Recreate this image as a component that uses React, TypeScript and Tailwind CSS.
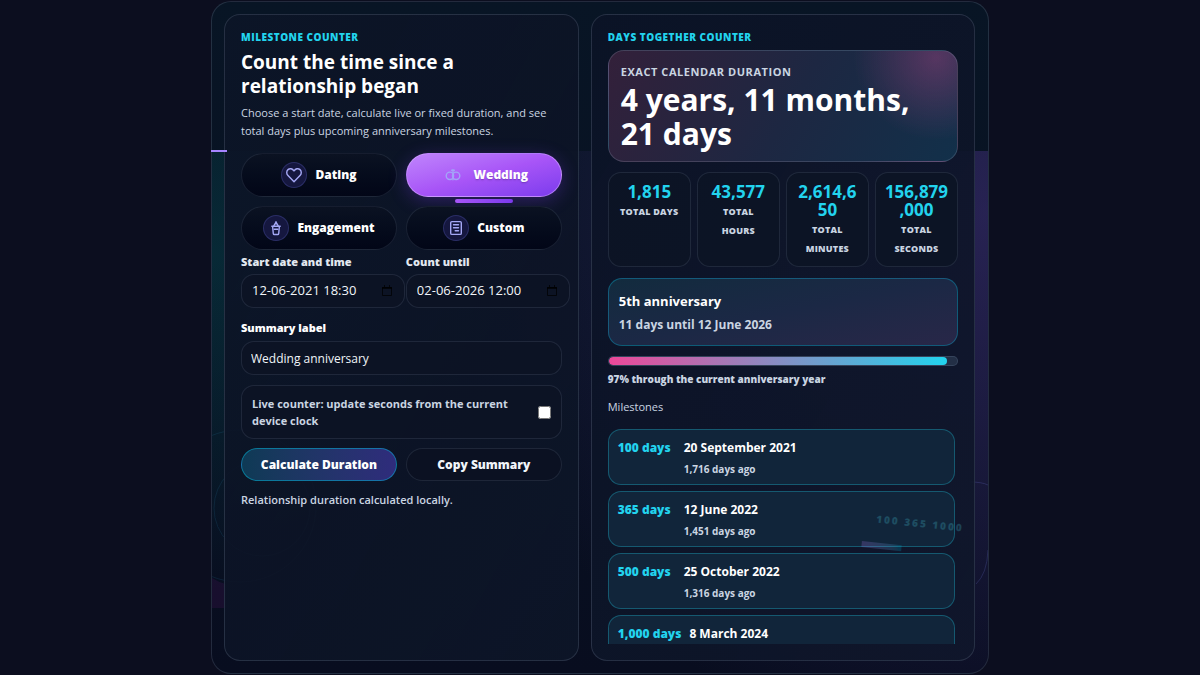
import React, { useState } from 'react';

type Kind = 'Dating' | 'Wedding' | 'Engagement' | 'Custom';

const kinds: Kind[] = ['Dating', 'Wedding', 'Engagement', 'Custom'];

const stats = [
  { value: '1,815', label: 'Total days' },
  { value: '43,577', label: 'Total hours' },
  { value: '2,614,650', label: 'Total minutes' },
  { value: '156,879,000', label: 'Total seconds' },
];

const milestones = [
  { tag: '100 days', date: '20 September 2021', note: '1,716 days ago' },
  { tag: '365 days', date: '12 June 2022', note: '1,451 days ago' },
  { tag: '500 days', date: '25 October 2022', note: '1,316 days ago' },
  { tag: '1,000 days', date: '8 March 2024', note: '816 days ago' },
];

const KindIcon: React.FC<{ kind: Kind }> = ({ kind }) => (
  <svg
    viewBox="0 0 18 18"
    className="size-[18px]"
    fill="none"
    stroke="currentColor"
    strokeWidth="1.400"
    strokeLinecap="round"
    strokeLinejoin="round"
    aria-hidden="true"
  >
    {kind === 'Dating' && (
      <path d="M9 15.800 3 9.600C1.200 7.700 1.400 5 3 3.600c1.900-1.600 4.500-1 6 1.400 1.500-2.400 4.100-3 6-1.400 1.600 1.400 1.800 4.100 0 6z" />
    )}
    {kind === 'Wedding' && (
      <>
        <circle cx="5.900" cy="9.800" r="3.700" />
        <circle cx="12.100" cy="9.800" r="3.700" />
        <path d="M9 3.600v10.200M7.600 4.200h2.800" />
      </>
    )}
    {kind === 'Engagement' && (
      <>
        <path d="M4.800 7.200h8.400M5.600 7.200l.7 7.400q.1.900 1 .9h3.400q.9 0 1-.9l.7-7.400" />
        <path d="M6.800 6.800 9 3l2.200 3.800M9 2.600v2.200M7.200 10.200h3.600" />
      </>
    )}
    {kind === 'Custom' && (
      <>
        <rect x="3.700" y="2.600" width="10.600" height="12.800" rx="1.200" />
        <path d="M6.500 5.800h5M6.500 8.800h5M8.200 11.800h3.300" />
      </>
    )}
  </svg>
);

const Eyebrow: React.FC<{ children: React.ReactNode }> = ({ children }) => (
  <p className="text-[10px] leading-3 font-extrabold uppercase tracking-wider text-[#22d3ee]">{children}</p>
);

type DateFieldProps = {
  id: string;
  label: string;
  defaultValue: string;
};

const DateField: React.FC<DateFieldProps> = ({ id, label, defaultValue }) => (
  <div className="min-w-0">
    <label htmlFor={id} className="block text-[11px] leading-[14px] font-extrabold text-slate-200">
      {label}
    </label>
    <div className="mt-[5px] flex h-[34px] w-[calc(100%+8px)] items-center rounded-[13px] border border-slate-400/15 bg-[#0c1324]/80 px-[10px]">
      <input
        id={id}
        type="text"
        defaultValue={defaultValue}
        className="min-w-0 flex-1 bg-transparent text-[13px] text-slate-100 outline-none"
      />
      <svg viewBox="0 0 12 12" className="mr-px size-3 shrink-0 text-black/70" fill="none" stroke="currentColor" aria-hidden="true">
        <path d="M1.500 2.500h9v8h-9z" />
        <path d="M1 3h10" strokeWidth="2" />
        <path d="M3.500 0v2M8.500 0v2" />
      </svg>
    </div>
  </div>
);

// faint shapes sitting behind the two panels
const Backdrop: React.FC = () => (
  <div className="pointer-events-none absolute inset-0 overflow-hidden rounded-[19px]">
    <div className="absolute inset-x-0 top-[149px] bottom-0 bg-[radial-gradient(circle_at_0%_20%,rgba(6,85,90,0.35),transparent_38%),radial-gradient(circle_at_100%_12%,rgba(70,50,130,0.5),transparent_60%)]" />
    <svg className="absolute inset-0 size-full" fill="none" aria-hidden="true">
      <circle cx="28" cy="504" r="76" stroke="#38bdf8" strokeOpacity="0.1" />
      <circle cx="50" cy="506" r="48" stroke="#38bdf8" strokeOpacity="0.1" />
      <path d="M0 576q6 4 14 6v24H0z" fill="#a21caf" fillOpacity="0.1" />
      <path d="M758 480q12 0 18 3M776 548q-1 24-12 34" stroke="#818cf8" strokeOpacity="0.18" />
    </svg>
  </div>
);

const App: React.FC = () => {
  const [kind, setKind] = useState<Kind>('Wedding');

  return (
    <div className="min-h-screen bg-[#0c0e1f] pt-px font-['Open_Sans','Noto_Sans',sans-serif] text-slate-100">
      <main className="relative mx-auto grid max-w-[778px] grid-cols-[12fr_13fr] gap-3 rounded-[20px] border border-slate-400/20 bg-linear-to-b from-[#081525] to-[#080d1f] py-3 pr-[13px] pl-3">
        <Backdrop />
        <span className="absolute top-[148px] -left-px z-10 h-[2px] w-4 bg-violet-400" />

        <section className="relative rounded-2xl border border-slate-400/20 bg-linear-to-br from-[#0c1527]/95 via-[#0d1426]/90 to-[#0d1628]/95 p-4">
          <Eyebrow>Milestone counter</Eyebrow>
          <h1 className="mt-[7px] text-[19px] leading-6 font-bold text-white">
            Count the time since a relationship began
          </h1>
          <p className="mt-[6px] text-[11px] leading-[18px] text-slate-300">
            Choose a start date, calculate live or fixed duration, and see total days plus upcoming anniversary
            milestones.
          </p>

          <div className="mt-[13px] grid grid-cols-2 gap-[9px]">
            {kinds.map((k) => (
              <button
                key={k}
                type="button"
                aria-pressed={k === kind}
                onClick={() => setKind(k)}
                className={
                  k === kind
                    ? 'relative flex h-11 items-center justify-center gap-2 rounded-full border border-purple-300/50 bg-linear-to-br from-[#c084fc] via-[#a855f7] to-[#7c3aed] text-xs font-extrabold text-white shadow-[0_4px_18px_rgba(124,58,237,0.3)] text-shadow-sm'
                    : 'relative flex h-11 items-center justify-center gap-2 rounded-full border border-slate-400/15 bg-linear-to-b from-[#0b1222] to-[#020617] text-xs font-extrabold text-white'
                }
              >
                <span
                  className={
                    k === kind
                      ? 'flex size-[26px] items-center justify-center text-[#a3a5f8]'
                      : 'flex size-[26px] items-center justify-center rounded-full border border-indigo-400/20 bg-[#15173f] text-[#a5a8f5]'
                  }
                >
                  <KindIcon kind={k} />
                </span>
                {k}
                {k === kind && (
                  <span className="absolute -bottom-[7px] left-1/2 h-1 w-[58px] -translate-x-1/2 rounded-full bg-linear-to-r from-[#a855f7] to-[#7c3aed]" />
                )}
              </button>
            ))}
          </div>

          <div className="mt-[5px] grid grid-cols-2 gap-[9px]">
            <DateField id="start" label="Start date and time" defaultValue="12-06-2021 18:30" />
            <DateField id="until" label="Count until" defaultValue="02-06-2026 12:00" />
          </div>

          <label htmlFor="summary" className="mt-[13px] block text-[11px] leading-[14px] font-extrabold text-white">
            Summary label
          </label>
          <input
            id="summary"
            type="text"
            defaultValue="Wedding anniversary"
            className="mt-[6px] block h-[34px] w-full rounded-[13px] border border-slate-400/15 bg-[#0c1324]/80 px-[9px] text-xs text-slate-100 outline-none"
          />

          <label className="mt-[10px] flex items-center justify-between gap-4 rounded-[13px] border border-slate-400/15 bg-[#0c1324]/80 px-[10px] py-[9px] text-[11px] leading-[17px] font-bold text-slate-300">
            Live counter: update seconds from the current device clock
            <input type="checkbox" className="size-[13px] shrink-0" />
          </label>

          <div className="mt-[9px] grid grid-cols-2 gap-[9px]">
            <button
              type="button"
              className="h-[33px] rounded-full border border-cyan-500/50 bg-linear-to-r from-[#0e3a55] to-[#2f2c7c] text-xs font-extrabold text-white"
            >
              Calculate Duration
            </button>
            <button
              type="button"
              className="h-[33px] rounded-full border border-slate-400/15 bg-[#0b1122] text-xs font-extrabold text-slate-100"
            >
              Copy Summary
            </button>
          </div>
          <p className="mt-[10px] text-[11px] leading-[17px] font-semibold text-slate-300">
            Relationship duration calculated locally.
          </p>
        </section>

        <section className="relative rounded-2xl border border-slate-400/20 bg-linear-to-br from-[#0b1326]/95 to-[#10172b]/90 p-4">
          <Eyebrow>Days together counter</Eyebrow>

          <div className="mt-[7px] rounded-2xl border border-slate-400/25 bg-[radial-gradient(circle_at_94%_6%,rgba(190,70,140,0.38),transparent_24%),linear-gradient(120deg,#33203a,#1d2742_52%,#12304a)] px-3 pt-3 pb-[10px]">
            <p className="text-[11px] leading-[18px] font-bold uppercase tracking-wider text-slate-300">
              Exact calendar duration
            </p>
            <p className="mt-[2px] text-3xl leading-[34px] font-bold text-white">4 years, 11 months, 21 days</p>
          </div>

          <div className="mt-[10px] grid grid-cols-4 gap-[6px]">
            {stats.map((s) => (
              <div
                key={s.label}
                className="rounded-[13px] border border-slate-400/15 bg-[#0c1425]/90 px-2 pt-[10px] pb-2 text-center"
              >
                <strong className="block text-[17px] leading-[18px] font-bold wrap-anywhere text-[#22d3ee]">
                  {s.value}
                </strong>
                <span className="mt-px block text-[9px] leading-[19px] font-extrabold uppercase tracking-wide text-slate-300">
                  {s.label}
                </span>
              </div>
            ))}
          </div>

          <div className="mt-[11px] rounded-[14px] border border-cyan-500/35 bg-linear-to-br from-[#122b3e] via-[#1b2845] to-[#282748] px-[10px] py-[9px]">
            <h2 className="text-[13px] leading-[26px] font-bold text-white">5th anniversary</h2>
            <p className="text-xs leading-[22px] font-bold text-slate-300">11 days until 12 June 2026</p>
          </div>

          <div className="mt-[10px] h-[10px] overflow-hidden rounded-full border border-slate-500/30 bg-slate-700/60">
            <div className="h-full w-[97%] rounded-full bg-linear-to-r/srgb from-[#ec4899] to-[#22d3ee]" />
          </div>
          <p className="mt-1 text-[10px] leading-[18px] font-extrabold text-slate-300">
            97% through the current anniversary year
          </p>
          <h3 className="mt-[10px] text-[11px] leading-[18px] text-slate-300">Milestones</h3>

          <ul className="mt-[13px] flex max-h-[215px] flex-col gap-[6px] overflow-y-auto pr-[3px] [scrollbar-width:none]">
            {milestones.map((m) => (
              <li
                key={m.tag}
                className="flex shrink-0 gap-2 rounded-[13px] border border-[#22d3ee]/30 bg-[#11253a] px-[9px] pt-[7px] pb-[5px]"
              >
                <strong className="min-w-[58px] text-xs leading-[22px] font-extrabold text-[#22d3ee]">{m.tag}</strong>
                <div>
                  <p className="text-xs leading-[22px] font-bold text-white">{m.date}</p>
                  <p className="text-[10px] leading-5 font-bold text-slate-300">{m.note}</p>
                </div>
              </li>
            ))}
          </ul>
        </section>

        <div className="pointer-events-none absolute right-[25px] bottom-[120px] rotate-6 opacity-20" aria-hidden="true">
          <p className="text-[10px] leading-4 font-extrabold tracking-[2px] text-cyan-300">100 365 1000</p>
          <div className="mt-4 -ml-3 h-[6px] w-10 bg-linear-to-r from-purple-400 to-cyan-500" />
        </div>
      </main>
    </div>
  );
};

export default App;
